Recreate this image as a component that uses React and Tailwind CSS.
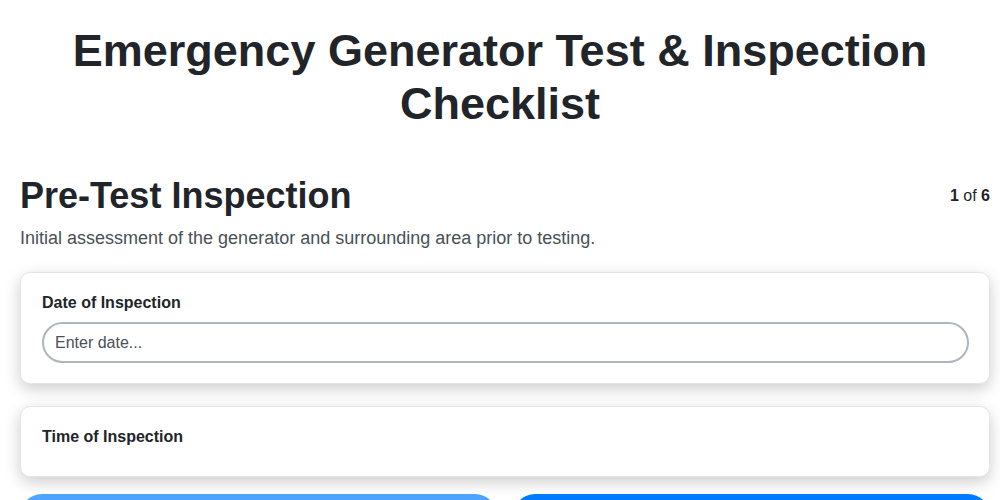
export default function App() {
  return (
    <div className="h-screen overflow-hidden bg-white font-['Liberation_Sans',Arial,sans-serif] text-[#212529]">
      <h1 className="px-5 pt-[24px] text-center text-[45px] font-bold leading-[53px]">
        Emergency Generator Test &amp; Inspection Checklist
      </h1>

      <div className="pl-5 pr-[10px]">
        <div className="mt-[44px] flex items-center justify-between">
          <h2 className="text-[36px] font-bold leading-[44px]">Pre-Test Inspection</h2>
          <div className="text-[16px]">
            <span className="font-bold">1</span> of <span className="font-bold">6</span>
          </div>
        </div>
        <p className="mt-[7px] text-[18px] leading-[27px] text-[#495057]">
          Initial assessment of the generator and surrounding area prior to testing.
        </p>

        <div className="mt-[20px] flex flex-col gap-[22px]">
          <div className="rounded-[10px] border border-[#e4e4ea] bg-white py-5 pl-[21px] pr-5 shadow-[0_5px_16px_rgba(0,0,0,0.2)]">
            <label className="mb-[10px] block text-[16px] font-bold leading-[19px]">Date of Inspection</label>
            <input
              type="text"
              placeholder="Enter date..."
              className="h-[41px] w-full rounded-full border-2 border-[#adb5bd] px-[11px] text-[16px] text-[#212529] outline-none placeholder:text-[#495057]"
            />
          </div>

          <div className="rounded-[10px] border border-[#e4e4ea] bg-white py-5 pl-[21px] pr-5 shadow-[0_5px_16px_rgba(0,0,0,0.2)]">
            <label className="mb-[10px] block text-[16px] font-bold leading-[19px]">Time of Inspection</label>
          </div>
        </div>

        <div className="mt-[17px] flex gap-4">
          <button className="h-[44px] flex-1 rounded-[22px] bg-[#4da3ff] text-white">Previous</button>
          <button className="h-[44px] flex-1 rounded-[22px] bg-[#007bff] text-white">Next</button>
        </div>
      </div>
    </div>
  );
}
